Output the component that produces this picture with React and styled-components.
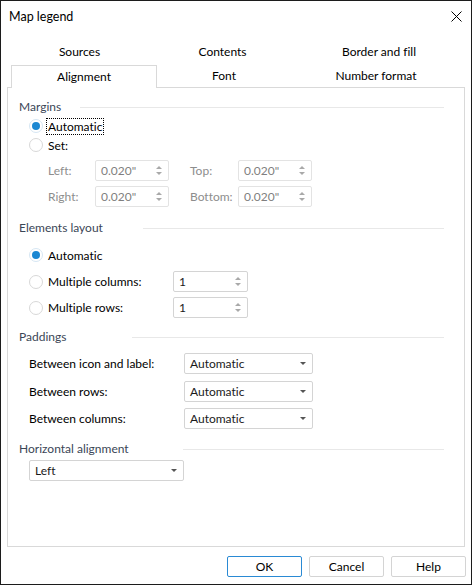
import React from 'react';
import styled, { createGlobalStyle } from 'styled-components';

const GlobalStyle = createGlobalStyle`
    html, body {
        margin: 0;
        padding: 0;
        background: #ffffff;
    }
    * {
        box-sizing: border-box;
    }
`;

const Window = styled.div`
    width: 472px;
    height: 585px;
    border: 1px solid #1c1c1c;
    background: #ffffff;
    display: flex;
    flex-direction: column;
    font-family: "Segoe UI", Lato, "Noto Sans", sans-serif;
    font-size: 12px;
    font-variant-ligatures: none;
    color: #000000;
`;

const TitleBar = styled.div`
    height: 30px;
    display: flex;
    align-items: center;
    justify-content: space-between;
    padding: 0 9px 0 8px;
    font-size: 12.5px;
`;

const CloseButton = styled.div`
    width: 12px;
    height: 12px;
    display: flex;
    align-items: center;
    justify-content: center;
`;

const TabRow = styled.div`
    display: flex;
    height: 22px;
    margin-top: ${(p) => p.$top}px;
    padding-left: ${(p) => p.$left}px;
`;

const Tab = styled.div`
    width: ${(p) => p.$width}px;
    display: flex;
    align-items: center;
    justify-content: center;
    padding-bottom: 2px;
    border: 1px solid ${(p) => (p.$active ? '#d9d9d9' : 'transparent')};
    border-bottom: none;
    background: #ffffff;
    position: relative;
    z-index: ${(p) => (p.$active ? 2 : 1)};
    margin-bottom: ${(p) => (p.$active ? -1 : 0)}px;
    height: ${(p) => (p.$active ? 23 : 22)}px;
`;

const Panel = styled.div`
    margin: 0 6px 0 6px;
    height: 460px;
    border: 1px solid #d9d9d9;
    padding: 0 0 0 11px;
    display: flex;
    flex-direction: column;
`;

const Header = styled.div`
    display: flex;
    align-items: center;
    height: 16px;
    margin-top: ${(p) => p.$top}px;
    color: #3b4656;
`;

const HeaderText = styled.div`
    width: ${(p) => p.$width}px;
    flex-shrink: 0;
`;

const HeaderLine = styled.div`
    width: ${(p) => 425 - p.$start}px;
    height: 1px;
    background: #e8e8e8;
    margin-top: 2px;
`;

const Row = styled.div`
    display: flex;
    align-items: center;
    height: ${(p) => p.$height || 18}px;
    margin-top: ${(p) => p.$top}px;
    padding-left: ${(p) => p.$indent || 0}px;
    color: ${(p) => (p.$disabled ? '#8d8d8d' : '#000000')};
`;

const RadioCircle = styled.div`
    width: 14px;
    height: 14px;
    border-radius: 50%;
    border: 1px solid ${(p) => (p.$checked ? '#d6e6f3' : '#d8d8d8')};
    display: flex;
    align-items: center;
    justify-content: center;
    margin-right: 5px;
    flex-shrink: 0;

    &::after {
        content: '';
        display: ${(p) => (p.$checked ? 'block' : 'none')};
        width: 8px;
        height: 8px;
        border-radius: 50%;
        background: #1b87d2;
    }
`;

const RadioLabel = styled.span`
    outline: ${(p) => (p.$focused ? '1px dotted #000000' : 'none')};
    outline-offset: 0px;
    line-height: 15px;
    padding: 0 1px;
    margin-left: -1px;
`;

const FieldLabel = styled.div`
    width: ${(p) => p.$width}px;
    flex-shrink: 0;
`;

const InputBox = styled.div`
    width: ${(p) => p.$width}px;
    height: 21px;
    border: 1px solid ${(p) => (p.$disabled ? '#e3e3e3' : '#d4d4d4')};
    border-radius: 2px;
    display: flex;
    align-items: center;
    justify-content: space-between;
    padding: 0 6px 0 5px;
    color: ${(p) => (p.$disabled ? '#7f7f7f' : '#1a1a1a')};
    margin-right: ${(p) => p.$gap || 0}px;
    flex-shrink: 0;
    background: #ffffff;
`;

const Spinner = styled.div`
    display: flex;
    flex-direction: column;
    align-items: center;
    gap: 3px;
`;

const Arrow = styled.div`
    width: 0;
    height: 0;
    border-left: ${(p) => p.$size || 3}px solid transparent;
    border-right: ${(p) => p.$size || 3}px solid transparent;
    ${(p) => (p.$up ? 'border-bottom' : 'border-top')}: ${(p) => p.$h || 3}px solid ${(p) => p.$color || '#a9a9a9'};
`;

const Footer = styled.div`
    display: flex;
    justify-content: flex-end;
    gap: 7px;
    padding: 9px 5px 0 0;
`;

const Button = styled.div`
    width: 75px;
    height: 21px;
    border: 1px solid ${(p) => (p.$primary ? '#2a8ad4' : '#d4d4d4')};
    border-radius: 2px;
    display: flex;
    align-items: center;
    justify-content: center;
    background: #ffffff;
`;

const Radio = ({ checked, focused, label, top }) => (
    <Row $top={top} $indent={10}>
        <RadioCircle $checked={checked} />
        <RadioLabel $focused={focused}>{label}</RadioLabel>
    </Row>
);

const SpinInput = ({ value, width, disabled, gap }) => (
    <InputBox $width={width} $disabled={disabled} $gap={gap}>
        <span>{value}</span>
        <Spinner>
            <Arrow $up />
            <Arrow />
        </Spinner>
    </InputBox>
);

const Select = ({ value, width }) => (
    <InputBox $width={width}>
        <span>{value}</span>
        <Arrow $size={3} $h={3} $color="#555555" />
    </InputBox>
);

const SectionHeader = ({ text, width, top }) => (
    <Header $top={top}>
        <HeaderText $width={width}>{text}</HeaderText>
        <HeaderLine $start={width} />
    </Header>
);

const App = () => {
    return (
        <>
            <GlobalStyle />
            <Window>
                <TitleBar>
                    <span>Map legend</span>
                    <CloseButton>
                        <svg width="11" height="11" viewBox="0 0 11 11">
                            <path d="M0.5 0.5 L10.5 10.5 M10.5 0.5 L0.5 10.5" stroke="#000" strokeWidth="1" />
                        </svg>
                    </CloseButton>
                </TitleBar>
                <TabRow $top={10} $left={8}>
                    <Tab $width={141}>Sources</Tab>
                    <Tab $width={145}>Contents</Tab>
                    <Tab $width={168}>Border and fill</Tab>
                </TabRow>
                <TabRow $top={2} $left={10}>
                    <Tab $width={146} $active>Alignment</Tab>
                    <Tab $width={134}>Font</Tab>
                    <Tab $width={170}>Number format</Tab>
                </TabRow>
                <Panel>
                    <SectionHeader text="Margins" width={61} top={10} />
                    <Radio checked focused label="Automatic" top={3} />
                    <Radio label="Set:" top={1} />
                    <Row $top={6} $height={21} $indent={29} $disabled>
                        <FieldLabel $width={47}>Left:</FieldLabel>
                        <SpinInput value={'0.020"'} width={74} disabled gap={21} />
                        <FieldLabel $width={48}>Top:</FieldLabel>
                        <SpinInput value={'0.020"'} width={74} disabled />
                    </Row>
                    <Row $top={5} $height={21} $indent={29} $disabled>
                        <FieldLabel $width={47}>Right:</FieldLabel>
                        <SpinInput value={'0.020"'} width={74} disabled gap={21} />
                        <FieldLabel $width={48}>Bottom:</FieldLabel>
                        <SpinInput value={'0.020"'} width={74} disabled />
                    </Row>
                    <SectionHeader text="Elements layout" width={124} top={12} />
                    <Radio checked label="Automatic" top={11} />
                    <Row $top={7} $height={21} $indent={10}>
                        <RadioCircle />
                        <FieldLabel $width={125}>Multiple columns:</FieldLabel>
                        <SpinInput value="1" width={75} />
                    </Row>
                    <Row $top={5} $height={21} $indent={10}>
                        <RadioCircle />
                        <FieldLabel $width={125}>Multiple rows:</FieldLabel>
                        <SpinInput value="1" width={75} />
                    </Row>
                    <SectionHeader text="Paddings" width={113} top={10} />
                    <Row $top={9} $height={21} $indent={10}>
                        <FieldLabel $width={155}>Between icon and label:</FieldLabel>
                        <Select value="Automatic" width={129} />
                    </Row>
                    <Row $top={7} $height={21} $indent={10}>
                        <FieldLabel $width={155}>Between rows:</FieldLabel>
                        <Select value="Automatic" width={129} />
                    </Row>
                    <Row $top={6} $height={21} $indent={10}>
                        <FieldLabel $width={155}>Between columns:</FieldLabel>
                        <Select value="Automatic" width={129} />
                    </Row>
                    <SectionHeader text="Horizontal alignment" width={164} top={11} />
                    <Row $top={4} $height={21} $indent={10}>
                        <Select value="Left" width={155} />
                    </Row>
                </Panel>
                <Footer>
                    <Button $primary>OK</Button>
                    <Button>Cancel</Button>
                    <Button>Help</Button>
                </Footer>
            </Window>
        </>
    );
};

export default App;
